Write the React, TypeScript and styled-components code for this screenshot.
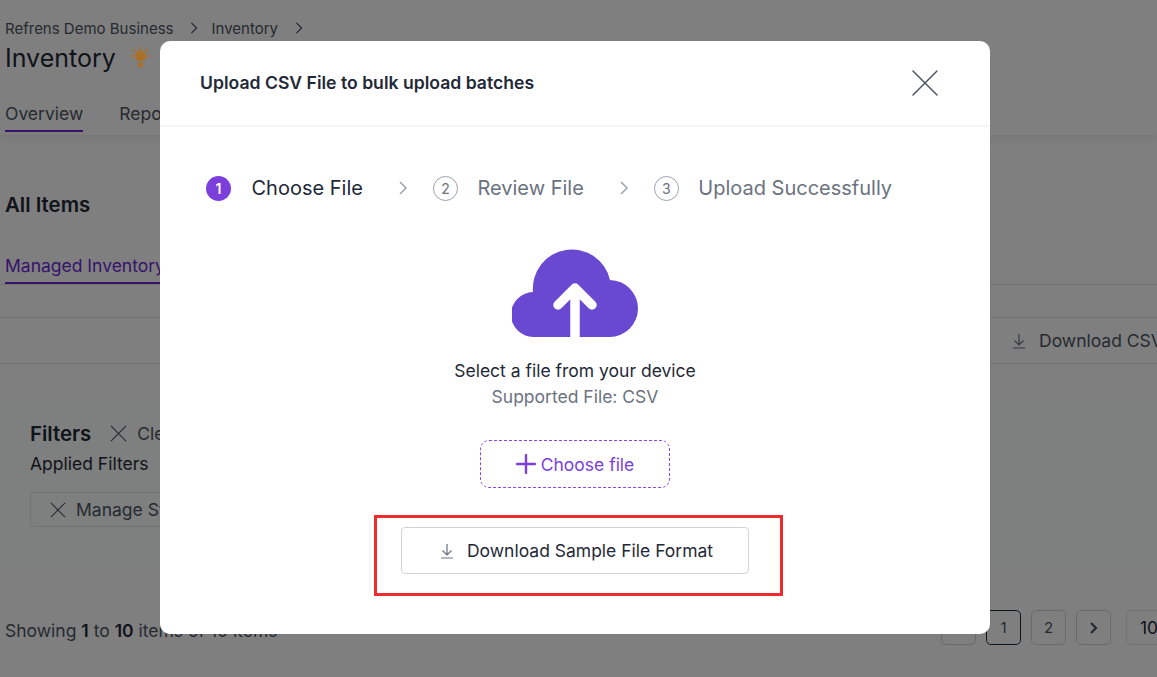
import React from 'react';
import styled, { createGlobalStyle } from 'styled-components';

const GlobalStyle = createGlobalStyle`
  html, body {
    margin: 0;
    padding: 0;
    height: 100%;
    overflow: hidden;
    background: #fff;
    font-family: Inter, 'Liberation Sans', sans-serif;
  }
`;

const Page = styled.div`
  position: relative;
  height: 677px;
  width: 1157px;
  overflow: hidden;
`;

const TopBar = styled.header`
  height: 135px;
  box-sizing: border-box;
  padding: 19px 0 0 5px;
  box-shadow: 0 2px 12px rgba(0, 0, 0, 0.1);
`;

const Breadcrumbs = styled.nav`
  display: flex;
  align-items: center;
  height: 18px;
  font-size: 15px;
  color: #4b5563;
`;

const Crumb = styled.span`
  margin-right: 17px;
`;

const CrumbArrow = styled.svg`
  width: 8px;
  height: 12px;
  margin-right: 13px;
  fill: none;
  stroke: #4b5563;
  stroke-width: 1.5;
`;

const TitleRow = styled.div`
  display: flex;
  align-items: center;
  gap: 13px;
  margin-top: 4px;
  height: 34px;
`;

const Title = styled.h1`
  margin: 0;
  font-size: 25px;
  font-weight: 400;
  color: #1f2937;
`;

const BulbIcon = styled.svg`
  position: relative;
  z-index: 1;
  width: 23px;
  height: 22px;
  fill: #a9702a;
  stroke: none;
`;

const Tabs = styled.div`
  display: flex;
  gap: 36px;
  margin-top: 27px;
`;

const Tab = styled.div<{ $active?: boolean }>`
  height: 28px;
  font-size: 17.5px;
  line-height: 24px;
  color: #4b5563;
  border-bottom: ${(p) => (p.$active ? '2px solid #6d28d9' : '2px solid transparent')};
`;

const Content = styled.main`
  padding: 58px 0 0 5px;
`;

const SectionTitle = styled.h2`
  margin: 0;
  height: 24px;
  line-height: 23px;
  font-size: 20.4px;
  font-weight: 600;
  color: #1f2937;
`;

const SubTabs = styled.div`
  margin: 37px 0 0 -5px;
  padding-left: 5px;
  border-bottom: 1px solid #e5e7eb;
`;

const SubTab = styled.div`
  height: 30px;
  line-height: 24px;
  font-size: 17.5px;
  color: #6d28d9;
  width: 175px;
  border-bottom: 2px solid #6d28d9;
  box-sizing: border-box;
  white-space: nowrap;
`;

const ToolRow = styled.div`
  margin: 32px 0 0 -5px;
  height: 47px;
  box-sizing: border-box;
  display: flex;
  align-items: center;
  justify-content: flex-end;
  border-top: 1px solid #e5e7eb;
  border-bottom: 1px solid #e5e7eb;
`;

const GhostAction = styled.div`
  display: flex;
  align-items: center;
  gap: 13px;
  width: 145px;
  flex-shrink: 0;
  font-size: 17.5px;
  color: #4b5563;
  white-space: nowrap;
  overflow: hidden;
`;

const FilterPanel = styled.section`
  margin: 30px 0 0 -5px;
  padding: 27px 30px 0;
  height: 177px;
  box-sizing: border-box;
  background: #fdfefe;
  box-shadow: 0 0 10px rgba(0, 0, 0, 0.02);
`;

const FilterHead = styled.div`
  display: flex;
  align-items: center;
  height: 24px;
`;

const FilterTitle = styled.strong`
  font-size: 20.4px;
  font-weight: 600;
  color: #1f2937;
  margin-right: 19px;
`;

const ClearLabel = styled.span`
  margin-left: 10px;
  font-size: 17.5px;
  color: #4b5563;
`;

const AppliedLabel = styled.div`
  margin-top: 7px;
  font-size: 17.5px;
  line-height: 24px;
  color: #1f2937;
`;

const FilterChip = styled.div`
  display: flex;
  align-items: center;
  gap: 10px;
  width: 200px;
  height: 35px;
  margin-top: 16px;
  padding-left: 19px;
  box-sizing: border-box;
  border: 1px solid #e5e7eb;
  border-radius: 4px;
  font-size: 17.5px;
  color: #4b5563;
  white-space: nowrap;
`;

const FooterRow = styled.div`
  display: flex;
  align-items: center;
  justify-content: space-between;
  margin-top: 39px;
  height: 35px;
`;

const Showing = styled.div`
  margin-top: 5px;
  font-size: 17.5px;
  color: #4b5563;
  b {
    font-weight: 600;
    color: #1f2937;
  }
`;

const Pager = styled.div`
  display: flex;
  gap: 10px;
`;

const PageButton = styled.div<{ $current?: boolean }>`
  width: 35px;
  height: 35px;
  box-sizing: border-box;
  display: flex;
  align-items: center;
  justify-content: center;
  border-radius: 5px;
  border: 1px solid ${(p) => (p.$current ? '#1f2937' : '#d1d5db')};
  font-size: 15px;
  color: #4b5563;
`;

const PageSize = styled(PageButton)`
  width: 60px;
  margin: 0 -29px 0 5px;
  justify-content: flex-start;
  padding-left: 13px;
  font-size: 17.5px;
  color: #1f2937;
  border-color: #e5e7eb;
`;

const Overlay = styled.div`
  position: absolute;
  inset: 0;
  background: rgba(0, 0, 0, 0.5);
  display: flex;
  justify-content: center;
  align-items: flex-start;
  padding: 41px 167px 0 160px;
  box-sizing: border-box;
`;

const Modal = styled.div`
  width: 830px;
  height: 593px;
  background: #fff;
  border-radius: 10px;
  display: flex;
  flex-direction: column;
`;

const ModalHeader = styled.div`
  height: 86px;
  flex-shrink: 0;
  box-sizing: border-box;
  display: flex;
  align-items: center;
  justify-content: space-between;
  padding: 0 51px 2px 40px;
  border-bottom: 2px solid #f3f4f6;
`;

const ModalTitle = styled.div`
  font-size: 17.6px;
  font-weight: 600;
  color: #1f2937;
`;

const CloseIcon = styled.svg`
  width: 28px;
  height: 28px;
  margin-top: 2px;
  fill: none;
  stroke: #4b5563;
  stroke-width: 1.5;
  stroke-linecap: round;
`;

const Stepper = styled.ol`
  display: flex;
  align-items: center;
  list-style: none;
  margin: 48px 0 0;
  padding: 0 0 0 46px;
  height: 26px;
`;

const Step = styled.li`
  display: flex;
  align-items: center;
`;

const StepBadge = styled.span<{ $active?: boolean }>`
  width: 25px;
  height: 25px;
  box-sizing: border-box;
  border-radius: 50%;
  display: flex;
  align-items: center;
  justify-content: center;
  font-size: 14px;
  font-weight: ${(p) => (p.$active ? 600 : 400)};
  color: ${(p) => (p.$active ? '#fff' : '#6b7280')};
  background: ${(p) => (p.$active ? '#7c3fdc' : '#fff')};
  border: ${(p) => (p.$active ? 'none' : '1px solid #9ca3af')};
`;

const StepLabel = styled.span<{ $active?: boolean }>`
  margin-left: ${(p) => (p.$active ? '20.5px' : '19.5px')};
  font-size: 20px;
  color: ${(p) => (p.$active ? '#1f2937' : '#6b7280')};
  white-space: nowrap;
`;

const StepArrow = styled.svg`
  width: 10px;
  height: 14px;
  margin: 0 24.5px 0 35.5px;
  fill: none;
  stroke: #9ca3af;
  stroke-width: 1.5;
`;

const Body = styled.div`
  display: flex;
  flex-direction: column;
  align-items: center;
  margin-top: 48px;
`;

const Cloud = styled.svg`
  display: block;
  width: 126px;
  height: 88px;
`;

const SelectText = styled.div`
  margin-top: 22px;
  font-size: 17.5px;
  line-height: 24px;
  color: #1f2937;
`;

const SupportedText = styled.div`
  margin-top: 2px;
  font-size: 17.5px;
  line-height: 24px;
  color: #6b7280;
`;

const ChooseButton = styled.button`
  margin-top: 31px;
  width: 190px;
  height: 48px;
  display: flex;
  align-items: center;
  justify-content: center;
  gap: 5px;
  background: #fff;
  border: 1px dashed #8b46e6;
  border-radius: 9px;
  font: 400 17.5px Inter, 'Liberation Sans', sans-serif;
  color: #7c3fdc;
`;

const Highlight = styled.div`
  margin: 27px 0 0 7px;
  width: 409px;
  height: 81px;
  box-sizing: border-box;
  border: 3px solid #f02b2e;
  padding: 9px 31px 19px 24px;
`;

const DownloadButton = styled.button`
  width: 348px;
  height: 47px;
  padding: 0 0 0 3px;
  display: flex;
  align-items: center;
  justify-content: center;
  gap: 13px;
  background: #fff;
  border: 1px solid #d1d5db;
  border-radius: 4px;
  font: 400 17.5px Inter, 'Liberation Sans', sans-serif;
  color: #1f2937;
`;

const DownloadGlyph = styled.svg`
  flex-shrink: 0;
  width: 14px;
  height: 16px;
  fill: none;
  stroke: #6b7280;
  stroke-width: 1.2;
`;

const Cross = ({ size = 17 }: { size?: number }) => (
  <svg width={size} height={size} viewBox="0 0 18 18" fill="none" stroke="#4b5563" strokeWidth="1.2">
    <path d="M1 1l16 16M17 1L1 17" />
  </svg>
);

const DownloadIcon = () => (
  <DownloadGlyph viewBox="0 0 14 16">
    <path d="M7 1v10.500M2.500 7.500L7 12l4.500-4.500M1 15h12" />
  </DownloadGlyph>
);

const Bulb = () => (
  <BulbIcon viewBox="0 0 23 22">
    <circle cx="11.5" cy="9" r="5.7" />
    <path d="M8.700 16h5.600v2.500a1.500 1.500 0 0 1-1.500 1.500h-2.600a1.500 1.500 0 0 1-1.500-1.500z" />
    <path
      d="M11.500 .9v1.600M4.500 2.500L6 4M18.500 2.500L17 4M2 9h2.500M18.500 9H21"
      stroke="#a9702a"
      strokeWidth="1.700"
      strokeLinecap="round"
    />
  </BulbIcon>
);

const Chevron = () => <path d="M1.500 1l6 6-6 6" />;

const App = () => (
  <Page>
    <GlobalStyle />
    <TopBar>
      <Breadcrumbs>
        <Crumb>Refrens Demo Business</Crumb>
        <CrumbArrow viewBox="0 0 9 14">
          <Chevron />
        </CrumbArrow>
        <Crumb>Inventory</Crumb>
        <CrumbArrow viewBox="0 0 9 14">
          <Chevron />
        </CrumbArrow>
      </Breadcrumbs>
      <TitleRow>
        <Title>Inventory</Title>
        <Bulb />
      </TitleRow>
      <Tabs>
        <Tab $active>Overview</Tab>
        <Tab>Reports</Tab>
      </Tabs>
    </TopBar>
    <Content>
      <SectionTitle>All Items</SectionTitle>
      <SubTabs>
        <SubTab>Managed Inventory</SubTab>
      </SubTabs>
      <ToolRow>
        <GhostAction>
          <DownloadIcon />
          Download CSV
        </GhostAction>
      </ToolRow>
      <FilterPanel>
        <FilterHead>
          <FilterTitle>Filters</FilterTitle>
          <Cross />
          <ClearLabel>Clear</ClearLabel>
        </FilterHead>
        <AppliedLabel>Applied Filters</AppliedLabel>
        <FilterChip>
          <Cross size={16} />
          Manage Stock
        </FilterChip>
      </FilterPanel>
      <FooterRow>
        <Showing>
          Showing <b>1</b> to <b>10</b> items of 10 items
        </Showing>
        <Pager>
          <PageButton />
          <PageButton $current>1</PageButton>
          <PageButton>2</PageButton>
          <PageButton>
            <svg width="10" height="14" viewBox="0 0 10 14" fill="none" stroke="#4b5563" strokeWidth="2.2">
              <path d="M2 2l5 5-5 5" />
            </svg>
          </PageButton>
          <PageSize>10</PageSize>
        </Pager>
      </FooterRow>
    </Content>

    <Overlay>
      <Modal>
        <ModalHeader>
          <ModalTitle>Upload CSV File to bulk upload batches</ModalTitle>
          <CloseIcon viewBox="0 0 28 28">
            <path d="M2 2l24 24M26 2L2 26" />
          </CloseIcon>
        </ModalHeader>
        <Stepper>
          <Step>
            <StepBadge $active>1</StepBadge>
            <StepLabel $active>Choose File</StepLabel>
            <StepArrow viewBox="0 0 9 14">
              <Chevron />
            </StepArrow>
          </Step>
          <Step>
            <StepBadge>2</StepBadge>
            <StepLabel>Review File</StepLabel>
            <StepArrow viewBox="0 0 9 14">
              <Chevron />
            </StepArrow>
          </Step>
          <Step>
            <StepBadge>3</StepBadge>
            <StepLabel>Upload Successfully</StepLabel>
          </Step>
        </Stepper>
        <Body>
          <Cloud viewBox="0 0 126 88">
            <path
              fill="#6a49d2"
              d="M22 88A22.500 22.500 0 0 1 21 43A39.050 39.050 0 0 1 98 31A28.500 28.500 0 0 1 97 88Z"
            />
            <path
              d="M63 88V40M46 56L63 39L80 56"
              fill="none"
              stroke="#fff"
              strokeWidth="9.500"
              strokeLinecap="round"
              strokeLinejoin="round"
            />
          </Cloud>
          <SelectText>Select a file from your device</SelectText>
          <SupportedText>Supported File: CSV</SupportedText>
          <ChooseButton type="button">
            <svg width="20" height="20" viewBox="0 0 20 20" stroke="#7c3fdc" strokeWidth="2.4" strokeLinecap="round">
              <path d="M10 1v18M1 10h18" />
            </svg>
            Choose file
          </ChooseButton>
          <Highlight>
            <DownloadButton type="button">
              <DownloadIcon />
              Download Sample File Format
            </DownloadButton>
          </Highlight>
        </Body>
      </Modal>
    </Overlay>
  </Page>
);

export default App;
